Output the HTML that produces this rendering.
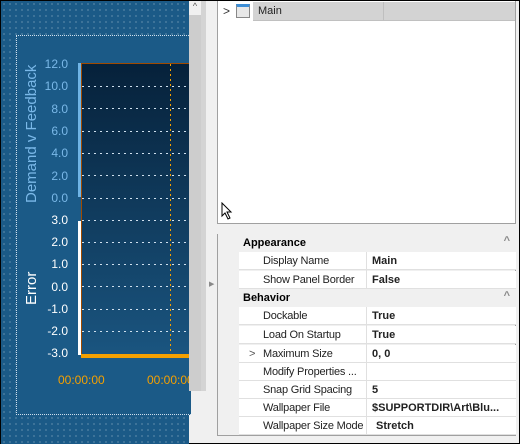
<!DOCTYPE html>
<html><head><style>
*{margin:0;padding:0;box-sizing:border-box}
body{width:520px;height:444px;overflow:hidden;background:#f0f0f0;font-family:"Liberation Sans",sans-serif;font-size:11px;position:relative;border:1px solid #000}
.a{position:absolute}
.blue{left:0;top:0;width:188px;height:443px;background-color:#1b5a87;background-image:radial-gradient(circle,rgba(255,255,255,.55) 0.6px,transparent 0.8px);background-size:6px 6px}
.inner{left:15px;top:34px;width:175px;height:380px;border:1px dotted #cfe0ee;border-right:none;background:#1b5a87}
.plot{left:80px;top:62px;width:110px;height:293px;background:linear-gradient(#06213a,#1a5580);border-top:1px solid #a04a00;border-left:1px solid #a04a00}
.lbl{font-size:12px;text-align:right;width:40px;left:27px}
.hl{left:81px;width:108px;height:1px;background:repeating-linear-gradient(to right,#cfe0ee 0 2px,transparent 2px 6px)}
.row{position:absolute;left:238px;width:277px;height:18px;border-bottom:1px solid #e0e0e0;background:#fff}
.row span{position:absolute;left:24px;top:3px;color:#222;letter-spacing:-0.2px;white-space:nowrap}
.row b{position:absolute;left:133px;top:3px;color:#222}
.hdr{position:absolute;left:238px;width:277px;height:18px;background:#f0f0f0;font-weight:bold;top:0}
.hdr span{position:absolute;left:4px;top:3px}
</style></head><body>
<div class="a blue"></div>
<div class="a inner"></div>
<div class="a plot"></div>
<div class="a" style="left:77px;top:62px;width:3px;height:134px;background:#6fb4e6"></div>
<div class="a" style="left:77px;top:220px;width:3px;height:134px;background:#fff"></div>
<div class="a" style="left:80px;top:353px;width:108px;height:4px;background:#f5a000"></div>
<div class="a" style="left:169px;top:63px;width:1px;height:290px;background:repeating-linear-gradient(#f5a000 0 2px,transparent 2px 5px)"></div>
<div class="a hl" style="top:85px"></div><div class="a hl" style="top:107px"></div><div class="a hl" style="top:130px"></div><div class="a hl" style="top:152px"></div><div class="a hl" style="top:174px"></div><div class="a hl" style="top:197px"></div><div class="a hl" style="top:219px"></div><div class="a hl" style="top:241px"></div><div class="a hl" style="top:263px"></div><div class="a hl" style="top:285px"></div><div class="a hl" style="top:308px"></div><div class="a hl" style="top:330px"></div>
<div class="a lbl" style="top:56px;color:#7ab8e8">12.0</div>
<div class="a lbl" style="top:78px;color:#7ab8e8">10.0</div>
<div class="a lbl" style="top:101px;color:#7ab8e8">8.0</div>
<div class="a lbl" style="top:123px;color:#7ab8e8">6.0</div>
<div class="a lbl" style="top:145px;color:#7ab8e8">4.0</div>
<div class="a lbl" style="top:168px;color:#7ab8e8">2.0</div>
<div class="a lbl" style="top:190px;color:#7ab8e8">0.0</div>
<div class="a lbl" style="top:212px;color:#fff">3.0</div>
<div class="a lbl" style="top:234px;color:#fff">2.0</div>
<div class="a lbl" style="top:256px;color:#fff">1.0</div>
<div class="a lbl" style="top:279px;color:#fff">0.0</div>
<div class="a lbl" style="top:301px;color:#fff">-1.0</div>
<div class="a lbl" style="top:323px;color:#fff">-2.0</div>
<div class="a lbl" style="top:345px;color:#fff">-3.0</div>
<div class="a" style="left:22px;top:202px;transform:rotate(-90deg);transform-origin:0 0;font-size:15px;color:#7ab8e8;white-space:nowrap">Demand v Feedback</div>
<div class="a" style="left:22px;top:304px;transform:rotate(-90deg);transform-origin:0 0;font-size:15px;color:#fff;white-space:nowrap">Error</div>
<div class="a" style="left:57px;top:372px;color:#f5a000;font-size:12px">00:00:00</div>
<div class="a" style="left:146px;top:372px;color:#f5a000;font-size:12px;width:42px;overflow:hidden;white-space:nowrap">00:00:00</div>
<div class="a" style="left:188px;top:0;width:12px;height:390px;background:#cdcdcd"></div>
<div class="a" style="left:188px;top:0;width:12px;height:14px;background:#f0f0f0;font-size:9px;text-align:center;color:#555">^</div>
<div class="a" style="left:200px;top:0;width:5px;height:390px;background:#d4d4d4"></div>
<div class="a" style="left:216px;top:0;width:299px;height:223px;background:#fff;border:1px solid #a0a0a0;border-top:none"></div>
<div class="a" style="left:252px;top:1px;width:262px;height:19px;background:#d3d3d3;border-bottom:1px solid #c0c0c0"></div>
<div class="a" style="left:382px;top:1px;height:19px;border-left:1px solid #bfbfbf"></div>
<div class="a" style="left:222px;top:3px;font-size:12px;color:#333">&gt;</div>
<div class="a" style="left:235px;top:3px;width:14px;height:14px;border:1px solid #888;background:#e8e8e8;border-top:3px solid #3d8ed6"></div>
<div class="a" style="left:257px;top:4px;color:#222">Main</div>
<svg class="a" style="left:220px;top:201px" width="12" height="18"><path d="M1 1 L1 14 L4 11 L7 17 L9 16 L6 10 L10 10 Z" fill="#fff" stroke="#000"/></svg>
<div class="a" style="left:208px;top:279px;font-size:7px;color:#888">▶</div>
<div class="a" style="left:216px;top:233px;width:299px;height:202px;background:#f0f0f0;border:1px solid #a0a0a0;border-top:none"></div>
<div class="hdr" style="top:233px"><span>Appearance</span><i style="position:absolute;right:6px;top:1px;font-style:normal;color:#888">^</i></div>
<div class="row" style="top:251px"><span>Display Name</span><b>Main</b></div>
<div class="row" style="top:270px"><span>Show Panel Border</span><b>False</b></div>
<div class="hdr" style="top:288px"><span>Behavior</span><i style="position:absolute;right:6px;top:1px;font-style:normal;color:#888">^</i></div>
<div class="row" style="top:306px"><span>Dockable</span><b>True</b></div>
<div class="row" style="top:325px"><span>Load On Startup</span><b>True</b></div>
<div class="row" style="top:344px"><span>Maximum Size</span><b>0, 0</b><i style="position:absolute;left:10px;top:3px;font-style:normal;color:#555">&gt;</i></div>
<div class="row" style="top:362px"><span>Modify Properties ...</span></div>
<div class="row" style="top:380px"><span>Snap Grid Spacing</span><b>5</b></div>
<div class="row" style="top:398px"><span>Wallpaper File</span><b>$SUPPORTDIR\Art\Blu...</b></div>
<div class="row" style="top:416px"><span>Wallpaper Size Mode</span><b style="left:137px">Stretch</b></div>
<div class="a" style="left:365px;top:251px;width:1px;height:183px;background:#e0e0e0"></div>
<div class="a" style="left:365px;top:288px;width:1px;height:18px;background:#f0f0f0"></div>
</body></html>
